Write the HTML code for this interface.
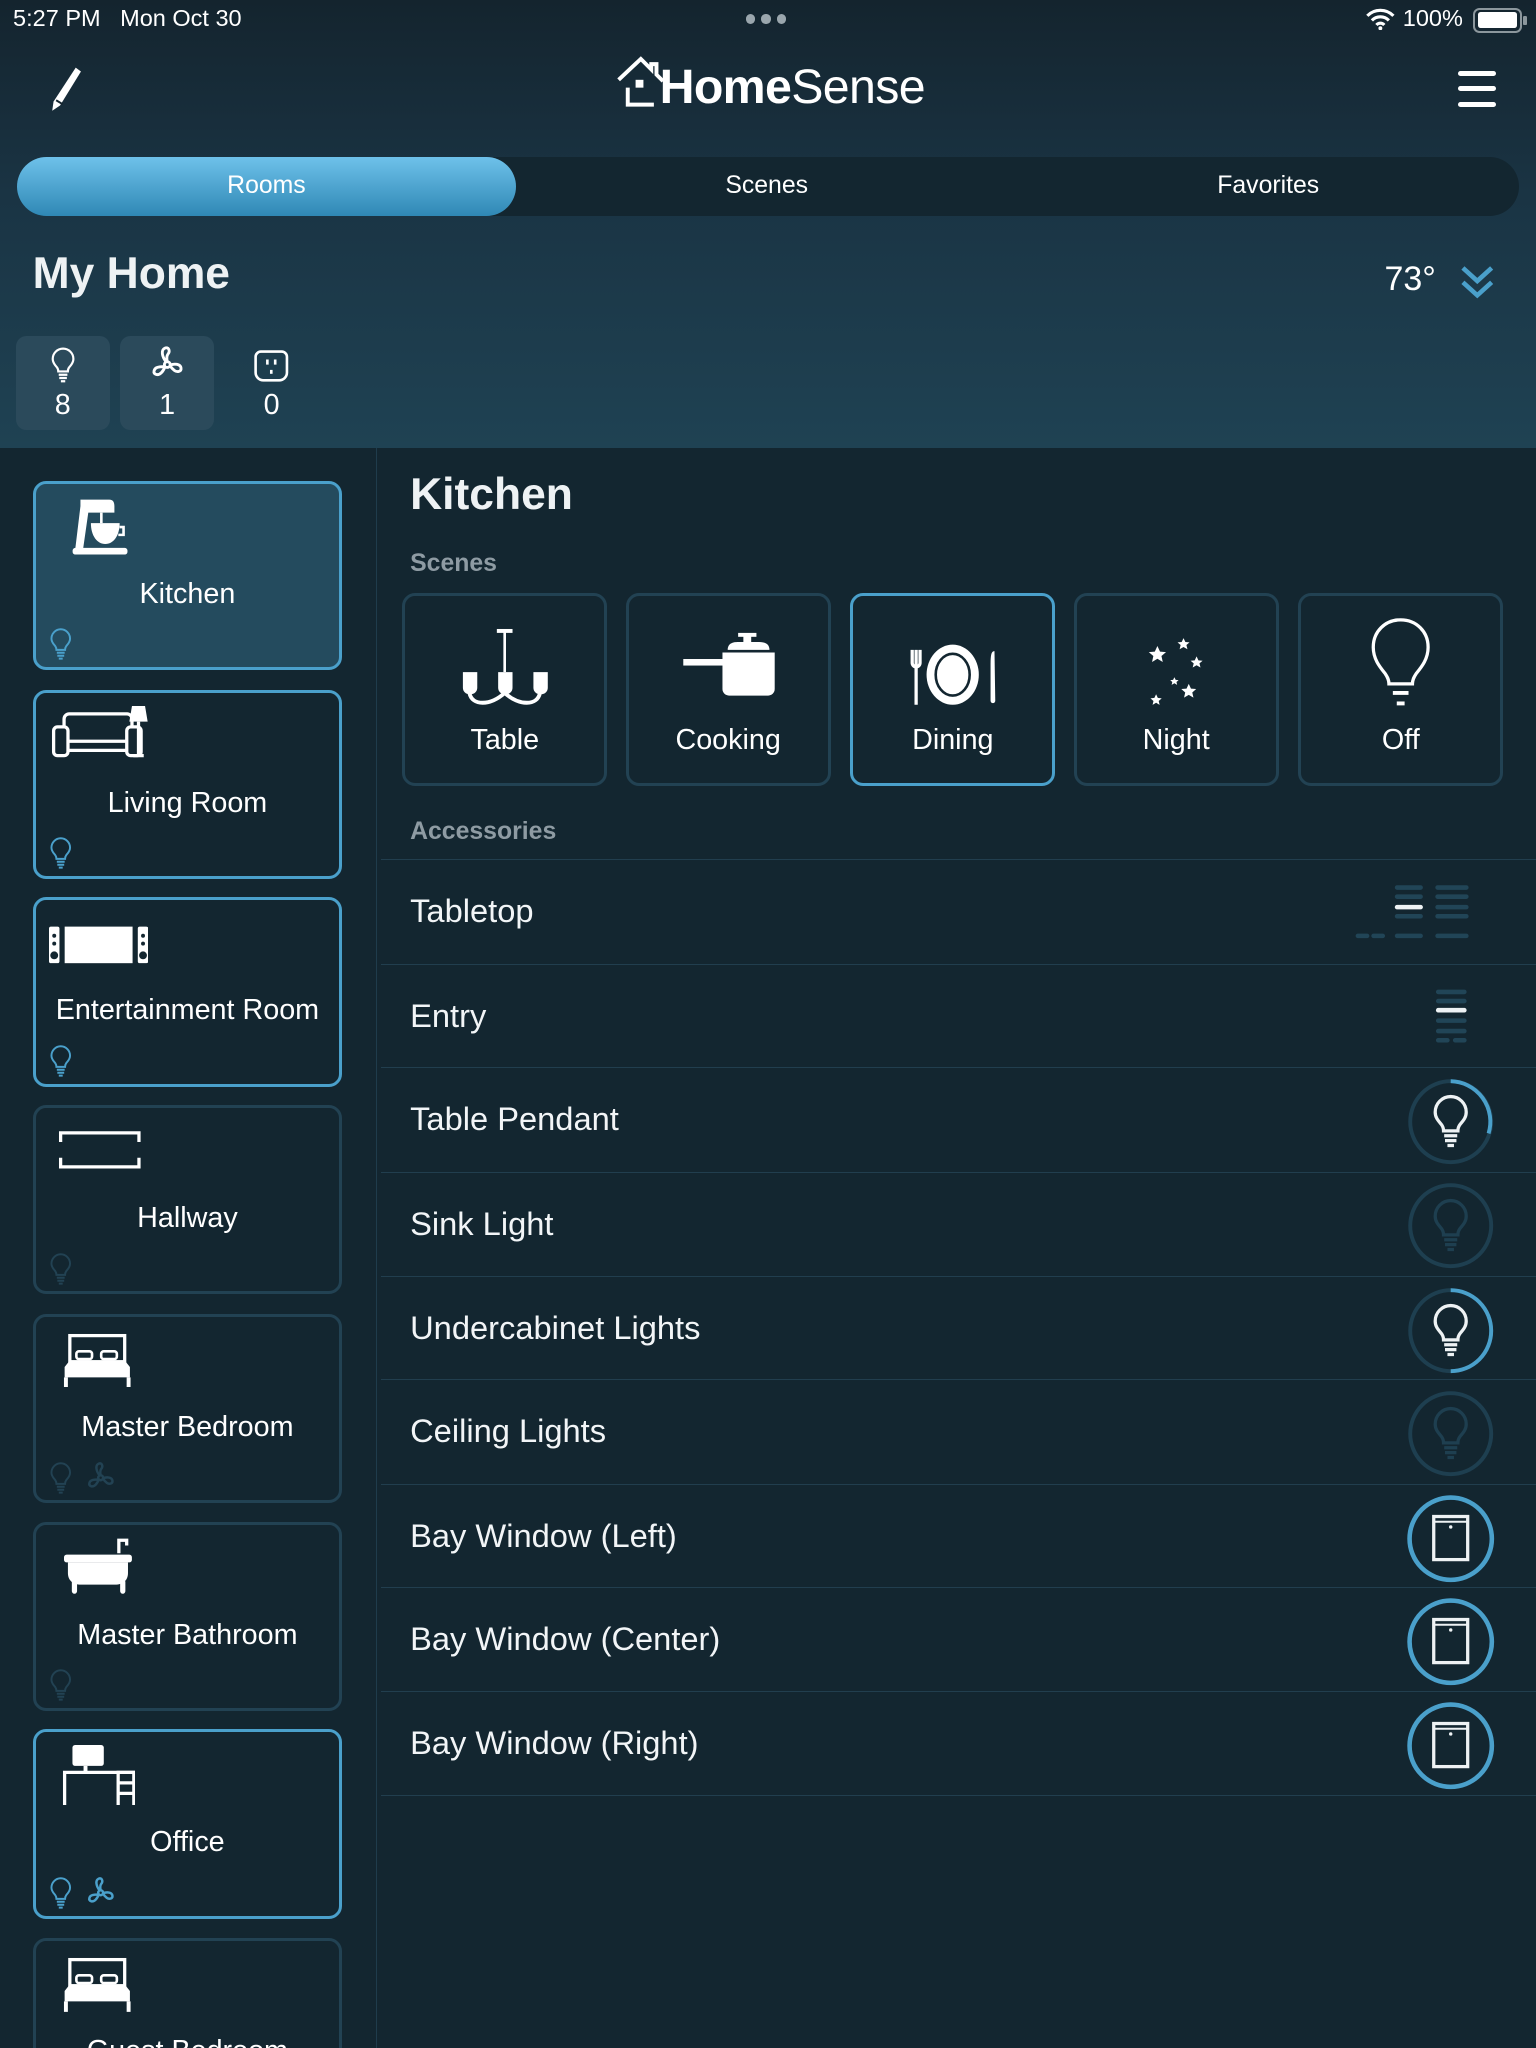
<!DOCTYPE html>
<html><head><meta charset="utf-8">
<style>
*{margin:0;padding:0;box-sizing:border-box}
html,body{width:1536px;height:2048px;overflow:hidden;background:#132630}
#w{zoom:1.30612;width:1176px;height:1568px;position:relative;font-family:"Liberation Sans",sans-serif;color:#fff;background:#132630;overflow:hidden}
.a{position:absolute}
#hdr{left:0;top:0;width:1176px;height:343px;background:linear-gradient(#14242e 0px,#1a3444 150px,#1f4253 343px)}
.seg{left:13px;top:120px;width:1150px;height:45px;border-radius:23px;background:#132630}
.act{left:13px;top:120px;width:382px;height:45px;border-radius:23px;background:linear-gradient(#6ec1ea,#2f88b5)}
.segt{top:120px;height:45px;line-height:45px;font-size:19px;text-align:center;width:382px}
.cnt{width:72px;height:72px;border-radius:8px;top:257px;text-align:center}
.cnt span{position:absolute;left:0;right:0;top:41px;font-size:22px}
.card{left:25px;width:237px;height:145px;border:3px solid #224253;border-radius:10px;background:#132630}
.card.on{border-color:#4aa0cb}
.card .lb{position:absolute;left:0;right:0;top:72px;text-align:center;font-size:22px}
.card .ic{position:absolute;left:12px;top:10px}
.card .st{position:absolute;left:10px;top:110px}
.scn{top:454px;width:157px;height:148px;border:3px solid #224253;border-radius:10px}
.scn.on{border-color:#4aa0cb}
.scn .lb{position:absolute;left:0;right:0;top:98px;text-align:center;font-size:22px}
.scn svg{position:absolute;left:28px;top:12px}
.row{left:292px;width:884px;height:80px;border-top:1px solid #213e4e}
.row .t{position:absolute;left:22px;top:0;line-height:78px;font-size:25px;color:#f2f5f7}
.row svg{position:absolute;left:784px;top:6px}
</style></head><body><div id="w">
<svg width="0" height="0" style="position:absolute">
<defs>
<symbol id="bulb" viewBox="0 0 24 34"><path d="M12 2a9.5 9.5 0 0 0-9.5 9.5c0 3.6 2.2 5.6 3.8 7.6 1 1.3 1.3 2.4 1.3 3.9h8.8c0-1.5.3-2.6 1.3-3.9 1.6-2 3.8-4 3.8-7.6A9.5 9.5 0 0 0 12 2z" fill="none" stroke="currentColor" stroke-width="2"/><path d="M8 26h8M8.5 29h7M10 32h4" stroke="currentColor" stroke-width="2" fill="none"/></symbol>
<symbol id="fan" viewBox="0 0 28 28"><g fill="none" stroke="currentColor" stroke-width="2.2"><circle cx="14" cy="15" r="2.2"/><path d="M13 12.8C10 9 9 4 12 2.5s4.5 2 2.5 4.5c-1 1.3-1 3.5-.5 5.8"/><path d="M16 15.5c3.5-1.5 8-1 8.5 2s-3 3.5-5 2c-1.3-1-2.5-2-3.5-4"/><path d="M12.2 16.5c-1 3.5-4 7-6.8 6s-1.5-4.5.8-5.3c1.6-.6 4-.7 6-.7"/></g></symbol>
</defs></svg>

<div id="hdr" class="a"></div>
<div class="a" style="left:10px;top:4px;font-size:18px">5:27 PM&nbsp;&nbsp;&nbsp;Mon Oct 30</div>
<div class="a" style="left:571px;top:11px;width:34px;display:flex;gap:5px"><i style="width:7px;height:7px;border-radius:50%;background:#9aa6ad;display:block"></i><i style="width:7px;height:7px;border-radius:50%;background:#9aa6ad;display:block"></i><i style="width:7px;height:7px;border-radius:50%;background:#9aa6ad;display:block"></i></div>
<svg class="a" style="left:1046px;top:6px" width="22" height="17" viewBox="0 0 22 17"><path d="M1 6a14 14 0 0 1 20 0M4.5 9.5a9 9 0 0 1 13 0M8 13a4 4 0 0 1 6 0" stroke="#fff" stroke-width="2.4" fill="none"/><circle cx="11" cy="15.5" r="1.5" fill="#fff"/></svg>
<div class="a" style="left:1074px;top:4px;font-size:18px">100%</div>
<div class="a" style="left:1128px;top:6px;width:37px;height:19px;border:2px solid #8c979d;border-radius:5px;padding:2px"><div style="width:100%;height:100%;background:#fff;border-radius:2px"></div></div>
<div class="a" style="left:1166px;top:12px;width:3px;height:7px;background:#8c979d;border-radius:1px"></div>

<svg class="a" style="left:36px;top:50px" width="28" height="36" viewBox="0 0 28 36"><path d="M22 2l4 3-16 26-6 4 1-7z" fill="#fff"/><path d="M7 27l5 3" stroke="#14242e" stroke-width="1.5"/></svg>
<svg class="a" style="left:472px;top:42px" width="40" height="40" viewBox="0 0 40 40"><path d="M2 19L19 3l8 8V7h4v8l5 5" stroke="#fff" stroke-width="3" fill="none"/><rect x="15" y="19" width="6" height="6" fill="#fff"/><path d="M9 25v13h20" stroke="#fff" stroke-width="3" fill="none"/></svg>
<div class="a" style="left:505px;top:45px;font-size:37px;letter-spacing:-0.5px"><b style="font-weight:700">Home</b><span style="font-weight:400">Sense</span></div>
<div class="a" style="left:1116px;top:54px;width:29px">
<div style="height:4px;background:#fff;border-radius:2px;margin-bottom:8px"></div><div style="height:4px;background:#fff;border-radius:2px;margin-bottom:8px"></div><div style="height:4px;background:#fff;border-radius:2px"></div></div>

<div class="a seg"></div><div class="a act"></div>
<div class="a segt" style="left:13px">Rooms</div>
<div class="a segt" style="left:396px">Scenes</div>
<div class="a segt" style="left:780px">Favorites</div>

<div class="a" style="left:25px;top:191px;font-size:34px;font-weight:700;color:#eef2f4">My Home</div>
<div class="a" style="left:1060px;top:199px;font-size:26px">73°</div>
<svg class="a" style="left:1117px;top:202px" width="28" height="28" viewBox="0 0 28 28"><path d="M3 3l11 10L25 3M3 14l11 10 11-10" stroke="#4aa0cb" stroke-width="3.5" fill="none"/></svg>

<div class="a cnt" style="left:12px;background:#2b4a5b"><svg style="position:absolute;left:26px;top:8px" width="20" height="29" color="#fff"><use href="#bulb"/></svg><span>8</span></div>
<div class="a cnt" style="left:92px;background:#2b4a5b"><svg style="position:absolute;left:22px;top:7px" width="28" height="28" color="#fff"><use href="#fan"/></svg><span>1</span></div>
<div class="a cnt" style="left:172px"><svg style="position:absolute;left:22px;top:10px" width="28" height="26" viewBox="0 0 28 26"><path d="M6 2h16a4 4 0 0 1 4 4v12a6 6 0 0 1-6 6H8a6 6 0 0 1-6-6V6a4 4 0 0 1 4-4z" fill="none" stroke="#fff" stroke-width="2"/><path d="M11 8v4M17 8v4" stroke="#fff" stroke-width="2"/><rect x="13" y="16" width="2" height="3" fill="#fff"/></svg><span>0</span></div>

<div class="a" style="left:288px;top:343px;width:1px;height:1225px;background:#1f3c4c"></div>

<div class="a card on" style="top:368px;background:#244b5e">
<svg class="ic" style="left:26px;top:10px" width="46" height="46" viewBox="0 0 46 46"><path d="M8 2h22c3 0 4 2 4 5v5H14l-4 28H4l4-33z" fill="#fff"/><rect x="2" y="39" width="42" height="5" rx="2" fill="#fff"/><path d="M16 20h22c0 10-5 16-11 16s-11-6-11-16z" fill="#fff"/><path d="M38 23h3v6h-4" stroke="#fff" stroke-width="2" fill="none"/><path d="M24 12v8" stroke="#fff" stroke-width="2"/></svg>
<div class="lb">Kitchen</div>
<svg class="st" width="18" height="26" color="#4aa0cb"><use href="#bulb"/></svg></div>

<div class="a card on" style="top:528px">
<svg class="ic" width="80" height="46" viewBox="0 0 80 46"><rect x="10" y="6" width="52" height="28" rx="4" fill="none" stroke="#fff" stroke-width="2.5"/><rect x="2" y="16" width="11" height="22" rx="3" fill="#132630" stroke="#fff" stroke-width="2.5"/><rect x="58" y="16" width="11" height="22" rx="3" fill="#132630" stroke="#fff" stroke-width="2.5"/><path d="M13 27h45" stroke="#fff" stroke-width="2.5"/><path d="M62 0h10l2 12H60z" fill="#fff"/><path d="M67 12v26M63 38h8" stroke="#fff" stroke-width="2.5"/></svg>
<div class="lb">Living Room</div>
<svg class="st" width="18" height="26" color="#4aa0cb"><use href="#bulb"/></svg></div>

<div class="a card on" style="top:687px">
<svg class="ic" style="left:10px;top:18px" width="76" height="36" viewBox="0 0 76 36"><rect x="0" y="2" width="8" height="28" rx="1.5" fill="#fff"/><rect x="12" y="2" width="52" height="28" fill="#fff"/><rect x="68" y="2" width="8" height="28" rx="1.5" fill="#fff"/><circle cx="4" cy="9" r="1.5" fill="#132630"/><circle cx="4" cy="15" r="1.5" fill="#132630"/><circle cx="4" cy="24" r="3" fill="#132630"/><circle cx="72" cy="9" r="1.5" fill="#132630"/><circle cx="72" cy="15" r="1.5" fill="#132630"/><circle cx="72" cy="24" r="3" fill="#132630"/></svg>
<div class="lb">Entertainment Room</div>
<svg class="st" width="18" height="26" color="#4aa0cb"><use href="#bulb"/></svg></div>

<div class="a card" style="top:846px">
<svg class="ic" style="left:17px;top:16px" width="64" height="32" viewBox="0 0 64 32"><path d="M2 10V3h60v7M2 22v7h60v-7" stroke="#fff" stroke-width="2.5" fill="none"/></svg>
<div class="lb">Hallway</div>
<svg class="st" width="18" height="26" color="#224253"><use href="#bulb"/></svg></div>

<div class="a card" style="top:1006px">
<svg class="ic" style="left:20px;top:12px" width="56" height="42" viewBox="0 0 56 42"><rect x="6" y="2" width="42" height="20" fill="none" stroke="#fff" stroke-width="2.5"/><rect x="11" y="14" width="12" height="6" rx="2" fill="none" stroke="#fff" stroke-width="2"/><rect x="30" y="14" width="12" height="6" rx="2" fill="none" stroke="#fff" stroke-width="2"/><path d="M2 26l4-5h42l4 5v8H2z" fill="#fff"/><path d="M3 34v8M51 34v8" stroke="#fff" stroke-width="3"/></svg>
<div class="lb">Master Bedroom</div>
<svg class="st" width="18" height="26" color="#224253"><use href="#bulb"/></svg><svg class="st" style="left:38px" width="24" height="24" color="#224253"><use href="#fan"/></svg></div>

<div class="a card" style="top:1165px">
<svg class="ic" style="left:22px;top:8px" width="54" height="46" viewBox="0 0 54 46"><path d="M42 14V4h6v4" stroke="#fff" stroke-width="2.5" fill="none"/><rect x="0" y="15" width="52" height="6" rx="2" fill="#fff"/><path d="M3 21h46v8c0 6-4 9-10 9H13c-6 0-10-3-10-9z" fill="#fff"/><path d="M8 36v7M45 36v7" stroke="#fff" stroke-width="4" stroke-linecap="round"/></svg>
<div class="lb">Master Bathroom</div>
<svg class="st" width="18" height="26" color="#224253"><use href="#bulb"/></svg></div>

<div class="a card on" style="top:1324px">
<svg class="ic" style="left:20px;top:10px" width="56" height="46" viewBox="0 0 56 46"><rect x="8" y="0" width="24" height="16" rx="2" fill="#fff"/><path d="M18 16v4" stroke="#fff" stroke-width="3"/><path d="M2 46V21h54" stroke="#fff" stroke-width="2.5" fill="none"/><path d="M43 46V21h12v25M43 29h12M43 37h12" stroke="#fff" stroke-width="2.5" fill="none"/></svg>
<div class="lb">Office</div>
<svg class="st" width="18" height="26" color="#4aa0cb"><use href="#bulb"/></svg><svg class="st" style="left:38px" width="24" height="24" color="#4aa0cb"><use href="#fan"/></svg></div>

<div class="a card" style="top:1484px">
<svg class="ic" style="left:20px;top:12px" width="56" height="42" viewBox="0 0 56 42"><rect x="6" y="2" width="42" height="20" fill="none" stroke="#fff" stroke-width="2.5"/><rect x="11" y="14" width="12" height="6" rx="2" fill="none" stroke="#fff" stroke-width="2"/><rect x="30" y="14" width="12" height="6" rx="2" fill="none" stroke="#fff" stroke-width="2"/><path d="M2 26l4-5h42l4 5v8H2z" fill="#fff"/><path d="M3 34v8M51 34v8" stroke="#fff" stroke-width="3"/></svg>
<div class="lb">Guest Bedroom</div></div>

<div class="a" style="left:314px;top:360px;font-size:34px;font-weight:700;color:#eef2f4">Kitchen</div>
<div class="a" style="left:314px;top:421px;font-size:19px;font-weight:700;color:#8e9ba3">Scenes</div>

<div class="a scn" style="left:308px"><svg width="96" height="80" viewBox="0 0 96 80"><path d="M48 14v32" stroke="#fff" stroke-width="2"/><rect x="42" y="13" width="12" height="3" fill="#fff"/><path d="M16 46h11v12a5 5 0 0 1-5 5h-1a5 5 0 0 1-5-5zM43 46h11v12a5 5 0 0 1-5 5h-1a5 5 0 0 1-5-5zM70 46h11v12a5 5 0 0 1-5 5h-1a5 5 0 0 1-5-5z" fill="#fff"/><path d="M21 62c2 10 16 10 27 0 11 10 25 10 27 0" stroke="#fff" stroke-width="3" fill="none"/></svg><div class="lb">Table</div></div>

<div class="a scn" style="left:479px"><svg width="96" height="80" viewBox="0 0 96 80"><rect x="14" y="36" width="34" height="5" fill="#fff"/><path d="M44 31h40v28a5 5 0 0 1-5 5H49a5 5 0 0 1-5-5z" fill="#fff"/><path d="M48 29c0-5 4-6 8-6h16c4 0 8 1 8 6" fill="#fff"/><rect x="60" y="17" width="6" height="6" fill="#fff"/><rect x="56" y="16" width="14" height="3" fill="#fff"/></svg><div class="lb">Cooking</div></div>

<div class="a scn on" style="left:651px"><svg width="96" height="80" viewBox="0 0 96 80"><path d="M17 29v10a3 3 0 0 0 6 0V29M20 29v42" stroke="#fff" stroke-width="2.5" fill="none"/><ellipse cx="48" cy="48" rx="20" ry="23" fill="#fff"/><ellipse cx="48" cy="48" rx="13" ry="16" fill="none" stroke="#132630" stroke-width="2"/><path d="M80 30c-3 0-3 5-3 12v26a1.8 1.8 0 0 0 3.6 0z" fill="#fff"/></svg><div class="lb">Dining</div></div>

<div class="a scn" style="left:822px"><svg width="96" height="80" viewBox="0 0 96 80" fill="#fff"><path d="M54 20l1.4 3 3.2.3-2.4 2 .8 3.2-3-1.7-3 1.7.8-3.2-2.4-2 3.2-.3z"/><path d="M34 26l2 4.3 4.6.4-3.5 3 1 4.6-4.1-2.5-4.1 2.5 1-4.6-3.5-3 4.6-.4z"/><path d="M64 34l1.4 3 3.2.3-2.4 2 .8 3.2-3-1.7-3 1.7.8-3.2-2.4-2 3.2-.3z"/><path d="M47 50l1 2 2.2.2-1.6 1.4.5 2.2-2.1-1.2-2.1 1.2.5-2.2-1.6-1.4 2.2-.2z"/><path d="M58 55l1.7 3.7 4 .3-3 2.6.9 4-3.6-2.1-3.6 2.1.9-4-3-2.6 4-.3z"/><path d="M33 63l1.3 2.8 3 .3-2.3 2 .7 3-2.7-1.6-2.7 1.6.7-3-2.3-2 3-.3z"/></svg><div class="lb">Night</div></div>

<div class="a scn" style="left:994px"><svg width="96" height="80" viewBox="0 0 96 80"><path d="M48 6c-12 0-21 9-21 21 0 9 5 15 9 20 2 3 3 5 3 8h18c0-3 1-5 3-8 4-5 9-11 9-20 0-12-9-21-21-21z" fill="none" stroke="#fff" stroke-width="2.5"/><path d="M42 62h12" stroke="#fff" stroke-width="3"/><path d="M45 70h6" stroke="#fff" stroke-width="3"/></svg><div class="lb">Off</div></div>

<div class="a" style="left:314px;top:626px;font-size:19px;font-weight:700;color:#8e9ba3">Accessories</div>

<div class="a row" style="top:658px"><div class="t">Tabletop</div>
<svg style="left:745px;top:16px" width="90" height="46" viewBox="0 0 90 46" stroke-linecap="round" stroke-width="3.5"><g stroke="#214557"><path d="M33 5h18M33 12h18M33 27h18M33 42h18M3 42h7M15 42h7M64 5h22M64 12h22M64 20h22M64 27h22M64 42h22"/></g><path d="M33 20h18" stroke="#eef2f4"/></svg></div>
<div class="a row" style="top:738px"><div class="t">Entry</div>
<svg style="left:805px;top:18px" width="30" height="44" viewBox="0 0 30 44" stroke-linecap="round" stroke-width="3.5" stroke="#214557"><path d="M4 3h20M4 10h20M4 25h20M4 33h20M4 40h7M17 40h7"/><path d="M4 17h20" stroke="#eef2f4"/></svg></div>

<div class="a row" style="top:817px"><div class="t">Table Pendant</div>
<svg width="70" height="70" viewBox="0 0 70 70"><circle cx="35" cy="35" r="31" fill="none" stroke="#1e3f50" stroke-width="3"/><path d="M35 4A31 31 0 0 1 64 44" fill="none" stroke="#4aa0cb" stroke-width="3"/><svg x="20" y="13" width="30" height="43" color="#eef2f4"><use href="#bulb"/></svg></svg></div>
<div class="a row" style="top:897px"><div class="t">Sink Light</div>
<svg width="70" height="70" viewBox="0 0 70 70"><circle cx="35" cy="35" r="31" fill="none" stroke="#1e3f50" stroke-width="3"/><svg x="20" y="13" width="30" height="43" color="#1e3f50"><use href="#bulb"/></svg></svg></div>
<div class="a row" style="top:977px"><div class="t">Undercabinet Lights</div>
<svg width="70" height="70" viewBox="0 0 70 70"><circle cx="35" cy="35" r="31" fill="none" stroke="#1e3f50" stroke-width="3"/><path d="M35 4A31 31 0 0 1 35 66" fill="none" stroke="#4aa0cb" stroke-width="3"/><svg x="20" y="13" width="30" height="43" color="#eef2f4"><use href="#bulb"/></svg></svg></div>
<div class="a row" style="top:1056px"><div class="t">Ceiling Lights</div>
<svg width="70" height="70" viewBox="0 0 70 70"><circle cx="35" cy="35" r="31" fill="none" stroke="#1e3f50" stroke-width="3"/><svg x="20" y="13" width="30" height="43" color="#1e3f50"><use href="#bulb"/></svg></svg></div>

<div class="a row" style="top:1136px"><div class="t">Bay Window (Left)</div>
<svg width="70" height="70" viewBox="0 0 70 70"><circle cx="35" cy="35" r="31.5" fill="none" stroke="#4aa0cb" stroke-width="3.5"/><rect x="22" y="18" width="26" height="33" fill="none" stroke="#eef2f4" stroke-width="2.5"/><path d="M22 22h26" stroke="#eef2f4" stroke-width="1.5"/><circle cx="35" cy="26" r="1.3" fill="#eef2f4"/></svg></div>
<div class="a row" style="top:1215px"><div class="t">Bay Window (Center)</div>
<svg width="70" height="70" viewBox="0 0 70 70"><circle cx="35" cy="35" r="31.5" fill="none" stroke="#4aa0cb" stroke-width="3.5"/><rect x="22" y="18" width="26" height="33" fill="none" stroke="#eef2f4" stroke-width="2.5"/><path d="M22 22h26" stroke="#eef2f4" stroke-width="1.5"/><circle cx="35" cy="26" r="1.3" fill="#eef2f4"/></svg></div>
<div class="a row" style="top:1295px;border-bottom:1px solid #213e4e"><div class="t">Bay Window (Right)</div>
<svg width="70" height="70" viewBox="0 0 70 70"><circle cx="35" cy="35" r="31.5" fill="none" stroke="#4aa0cb" stroke-width="3.5"/><rect x="22" y="18" width="26" height="33" fill="none" stroke="#eef2f4" stroke-width="2.5"/><path d="M22 22h26" stroke="#eef2f4" stroke-width="1.5"/><circle cx="35" cy="26" r="1.3" fill="#eef2f4"/></svg></div>

</div></body></html>
